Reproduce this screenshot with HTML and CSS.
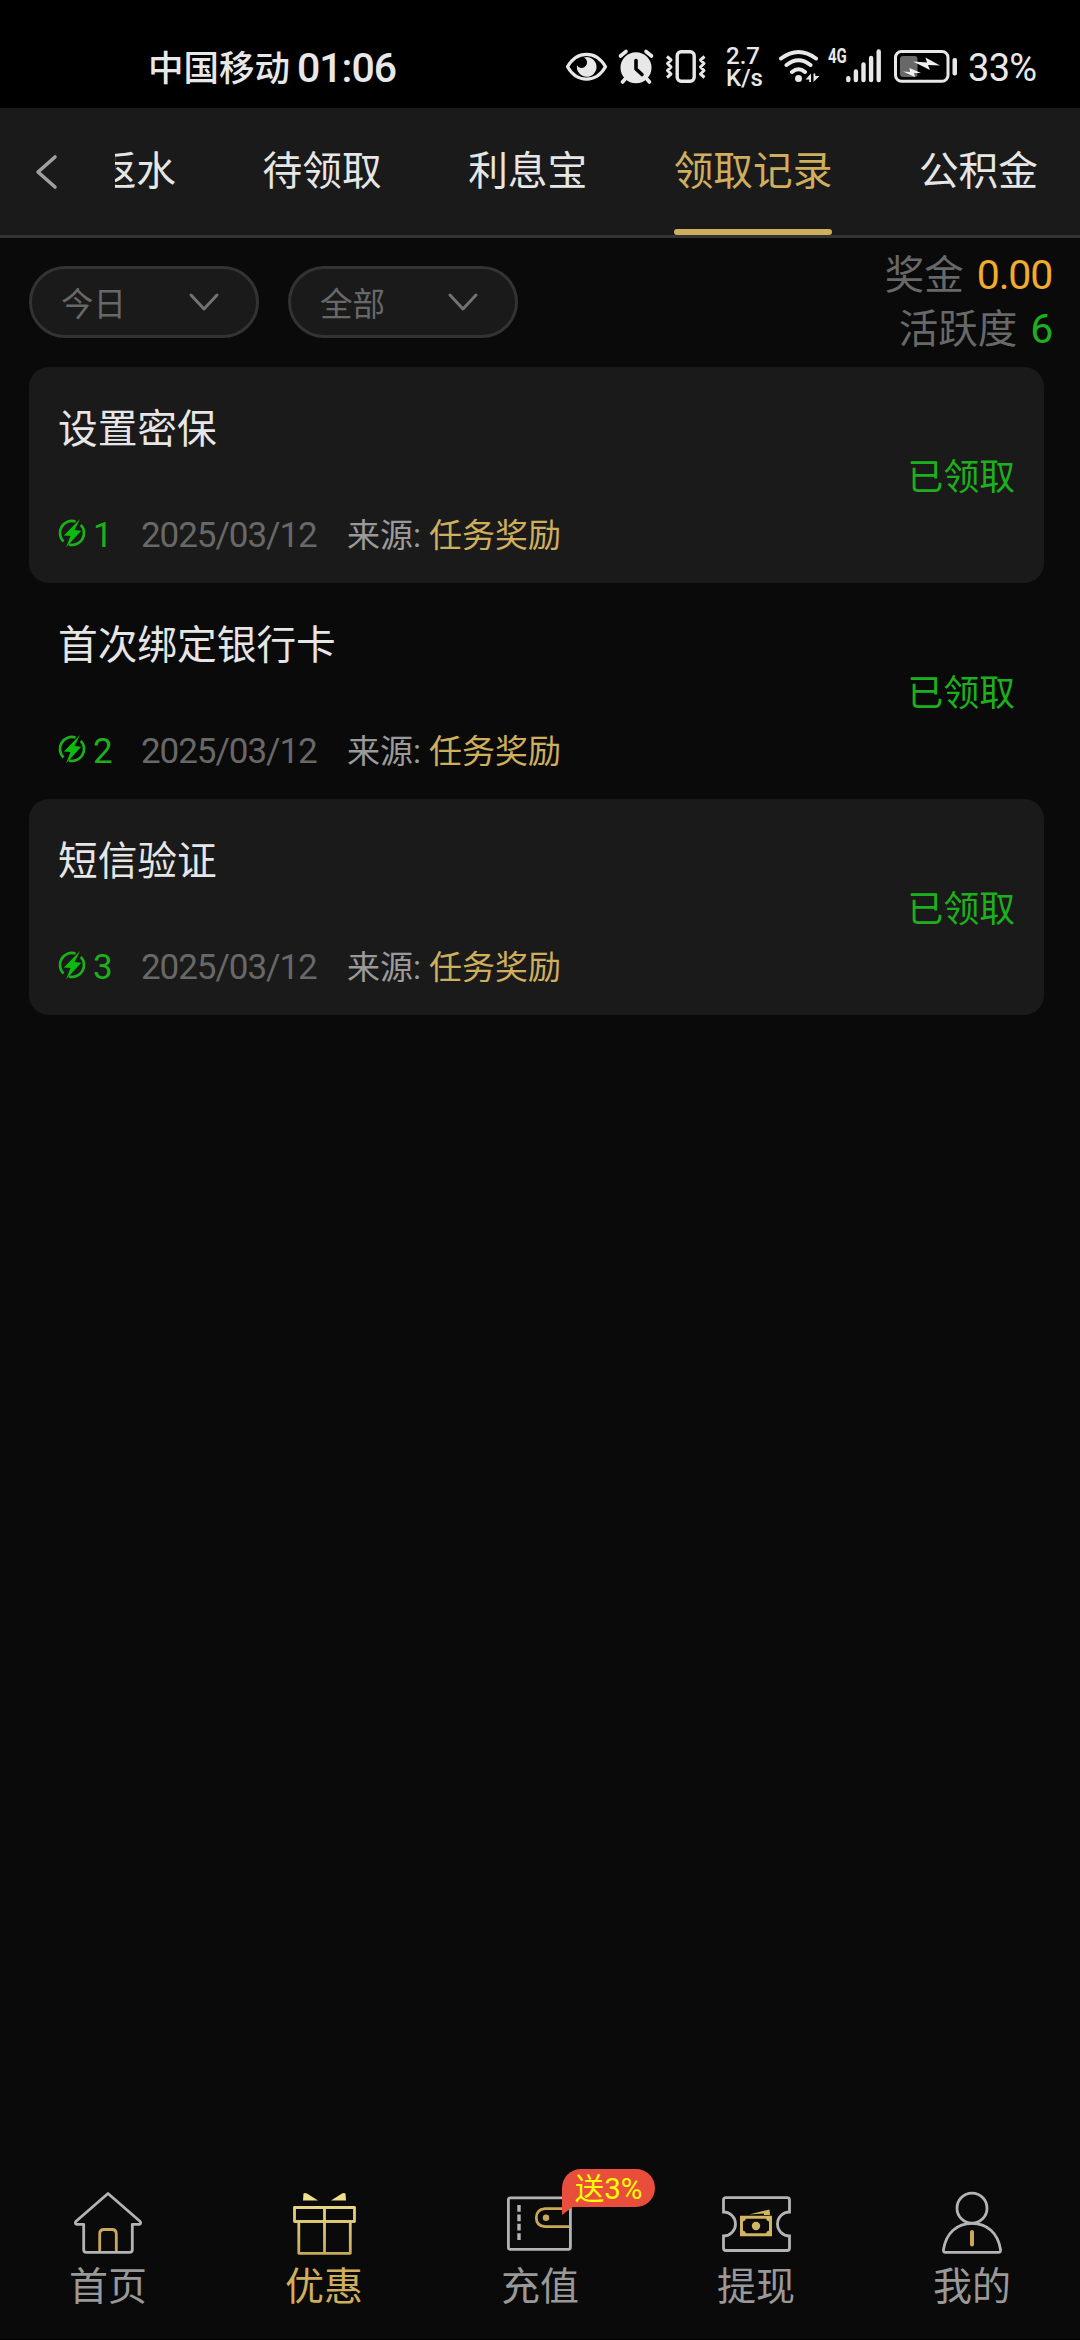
FILE: index.html
```html
<!DOCTYPE html>
<html lang="zh-CN">
<head>
<meta charset="utf-8">
<title>领取记录</title>
<link rel="stylesheet" href="styles.css">
</head>
<body>
<div class="screen">
  <div class="status">
    <span class="carrier">中国移动</span>
    <span class="clock">01:06</span>
    <div class="indicators">
      <svg class="eye" viewBox="565 47 44 40" width="44" height="40">
        <path d="M567.5 66.8C577 50.300 596 50.300 605.500 66.800C596 83.300 577 83.300 567.500 66.800Z" fill="none" stroke="#e8e8e8" stroke-width="3.200" stroke-linejoin="round"/>
        <path d="M584 57.500A9.800 9.800 0 1 1 577 65.500A5.500 5.500 0 1 0 584 57.500Z" fill="#e8e8e8"/>
      </svg>
      <svg class="alarm" viewBox="617 47 38 40" width="38" height="40">
        <circle cx="636" cy="67.800" r="15.500" fill="#e8e8e8"/>
        <path d="M620.500 56L626 51.500M651.500 56L646 51.500M626 78L622.500 82M646 78L649.500 82" stroke="#e8e8e8" stroke-width="3.600" stroke-linecap="round"/>
        <path d="M636 60.500V69L642 74.500" fill="none" stroke="#000" stroke-width="3.600" stroke-linecap="round" stroke-linejoin="round"/>
      </svg>
      <svg class="vibrate" viewBox="664 47 44 40" width="44" height="40">
        <rect x="677.200" y="51.700" width="17" height="29.600" rx="4" fill="none" stroke="#e8e8e8" stroke-width="3.400"/>
        <path d="M667 56.500L671 60L667.500 63.500L671 67L667.500 70.500L671 74L667 77.500M704.500 56.500L700.500 60L704 63.500L700.500 67L704 70.500L700.500 74L704.500 77.500" fill="none" stroke="#e8e8e8" stroke-width="3" stroke-linejoin="round"/>
      </svg>
      <div class="speed"><span>2.7</span><span>K/s</span></div>
      <svg class="wifi" viewBox="777 47 43 40" width="43" height="40">
        <path d="M780 58.500Q797.500 45.500 815 58.500M785.500 65Q797.500 55.500 809.500 65M791 72Q797.500 66.500 804 72" fill="none" stroke="#e8e8e8" stroke-width="4" stroke-linecap="round"/>
        <circle cx="797.500" cy="78.500" r="3.500" fill="#e8e8e8"/>
        <path d="M810 73.500V82H808.200V79.500H804.500ZM812.500 82V73.500H814.300V76H818.500Z" fill="#e8e8e8"/>
      </svg>
      <span class="net">4G</span>
      <svg class="signal" viewBox="844 47 38 40" width="38" height="40">
        <path d="M847.300 78.300V80M854.900 71.500V80M862.500 64.500V80M870.100 58V80M877.700 51.500V80" stroke="#e8e8e8" stroke-width="4.400" stroke-linecap="round"/>
      </svg>
      <svg class="battery" viewBox="892 47 66 40" width="66" height="40">
        <rect x="894.500" y="51.500" width="52.500" height="29.800" rx="6" fill="none" stroke="#e8e8e8" stroke-width="3"/>
        <rect x="899" y="56" width="17.500" height="21" rx="3" fill="#686868"/>
        <rect x="951.500" y="58" width="4.500" height="17.500" rx="2" fill="#e8e8e8"/>
        <path d="M912 61.500L926 62.500L924.500 57.500L939 65.500L927 65L929 70ZM902 71.500L909 72L908.500 68L920 73L913 73L914 77Z" fill="#f0f0f0"/>
      </svg>
      <span class="percent">33%</span>
    </div>
  </div>

  <header class="header">
    <svg class="back" viewBox="33 150 28 42" width="28" height="42"><path d="M55 156L38 171L55 186" fill="none" stroke="#a0a0a0" stroke-width="3.600" stroke-linecap="round" stroke-linejoin="round"/></svg>
    <nav class="tabs">
      <span class="tab">返水</span>
      <span class="tab">待领取</span>
      <span class="tab">利息宝</span>
      <span class="tab active">领取记录</span>
      <span class="tab">公积金</span>
    </nav>
  </header>

  <section class="filters">
    <div class="select"><span>今日</span><svg viewBox="0 0 32 20" width="32" height="20"><path d="M3 3L16 17L29 3" fill="none" stroke="#727272" stroke-width="3" stroke-linecap="round" stroke-linejoin="round"/></svg></div>
    <div class="select"><span>全部</span><svg viewBox="0 0 32 20" width="32" height="20"><path d="M3 3L16 17L29 3" fill="none" stroke="#727272" stroke-width="3" stroke-linecap="round" stroke-linejoin="round"/></svg></div>
    <div class="totals">
      <div>奖金<b class="money">0.00</b></div>
      <div>活跃度<b class="points">6</b></div>
    </div>
  </section>

  <svg class="defs" width="0" height="0">
    <defs>
      <symbol id="bolt" viewBox="0 0 28 30">
        <path d="M17.500 3.500A12 12 0 0 0 5.500 23.500M22.800 6.800A12 12 0 0 1 11 26.600" fill="none" stroke="#1cb01c" stroke-width="2.700"/>
        <path d="M22 1L5.800 17.500L12.500 18L8 29.500L23.200 12.800L16.500 12Z" fill="#0dbb0d"/>
      </symbol>
    </defs>
  </svg>

  <main class="list">
    <article class="record shaded">
      <div class="info">
        <h2>设置密保</h2>
        <div class="meta"><svg width="28" height="30"><use href="#bolt"/></svg><span class="count">1</span><span class="date">2025/03/12</span><span class="source">来源:</span><span class="reward">任务奖励</span></div>
      </div>
      <span class="state">已领取</span>
    </article>
    <article class="record">
      <div class="info">
        <h2>首次绑定银行卡</h2>
        <div class="meta"><svg width="28" height="30"><use href="#bolt"/></svg><span class="count">2</span><span class="date">2025/03/12</span><span class="source">来源:</span><span class="reward">任务奖励</span></div>
      </div>
      <span class="state">已领取</span>
    </article>
    <article class="record shaded">
      <div class="info">
        <h2>短信验证</h2>
        <div class="meta"><svg width="28" height="30"><use href="#bolt"/></svg><span class="count">3</span><span class="date">2025/03/12</span><span class="source">来源:</span><span class="reward">任务奖励</span></div>
      </div>
      <span class="state">已领取</span>
    </article>
  </main>

  <footer class="nav">
    <div class="item">
      <svg viewBox="68 2188 80 70" width="80" height="70" fill="none" stroke-width="2.800" stroke-linejoin="round">
        <path d="M99.700 2251V2234Q99.700 2229.500 104 2229.500H112Q116.300 2229.500 116.300 2234V2251" stroke="#c9a959"/>
        <path d="M108 2193.500L75.800 2221.500Q74.500 2224 77 2224.300H83.700V2249.500Q83.700 2252.400 86.500 2252.400H129.500Q132.300 2252.400 132.300 2249.500V2224.300H139Q141.500 2224 140.200 2221.500Z" stroke="#b4b4b4"/>
      </svg>
      <span>首页</span>
    </div>
    <div class="item active">
      <svg viewBox="284 2188 80 70" width="80" height="70">
        <defs><linearGradient id="gold" gradientUnits="userSpaceOnUse" x1="0" y1="2193" x2="0" y2="2255"><stop offset="0" stop-color="#f0e08c"/><stop offset="1" stop-color="#c9a85c"/></linearGradient></defs>
        <path d="M294.500 2207.500H354.500V2221.500H294.500ZM298.800 2221.500V2253.300H350.300V2221.500M324.500 2207.500V2253" fill="none" stroke="url(#gold)" stroke-width="2.800" stroke-linejoin="round"/>
        <path d="M303 2200.500L303.500 2193.500Q305 2192.300 307 2193.500L318 2200.500ZM346 2200.500L345.500 2193.500Q344 2192.300 342 2193.500L331 2200.500Z" fill="#f0e08c"/>
      </svg>
      <span>优惠</span>
    </div>
    <div class="item">
      <svg viewBox="500 2188 80 70" width="80" height="70" fill="none">
        <rect x="508.400" y="2197.800" width="62" height="51.500" rx="2" stroke="#b4b4b4" stroke-width="2.800"/>
        <path d="M519 2205V2240" stroke="#b4b4b4" stroke-width="3.400" stroke-dasharray="6.800 2.600"/>
        <path d="M569 2208.700H545Q536.300 2209.500 536.300 2217.700T545 2226.700H569" stroke="#c9a959" stroke-width="2.800"/>
        <circle cx="546" cy="2217.700" r="3.200" fill="#c9a959"/>
      </svg>
      <span>充值</span>
      <div class="badge">送3%</div>
    </div>
    <div class="item">
      <svg viewBox="716 2188 80 70" width="80" height="70">
        <path d="M723.500 2212V2200Q723.500 2197.700 726 2197.700H787Q789.500 2197.700 789.500 2200V2212A12 12 0 0 0 789.500 2236V2248Q789.500 2250.500 787 2250.500H726Q723.500 2250.500 723.500 2248V2236A12 12 0 0 0 723.500 2212Z" fill="none" stroke="#b4b4b4" stroke-width="2.800"/>
        <path fill-rule="evenodd" d="M740 2215.700H772V2236.200H740ZM746 2218.700Q745.500 2221 743 2221.500V2230.500Q745.500 2231 746 2233.300H766Q766.500 2231 769 2230.500V2221.500Q766.500 2221 766 2218.700ZM749 2214.500L769.500 2209.500L770 2215H764V2213.500Z" fill="#d2b560"/>
        <circle cx="756" cy="2226" r="4.200" fill="#d2b560"/>
      </svg>
      <span>提现</span>
    </div>
    <div class="item">
      <svg viewBox="932 2188 80 70" width="80" height="70" fill="none" stroke="#b4b4b4" stroke-width="2.800" stroke-linejoin="round">
        <circle cx="972" cy="2208.200" r="15"/>
        <path d="M945 2252.300Q943.200 2252.300 943.500 2249.500C946 2233 957 2223.300 972 2223.300S998 2233 1000.500 2249.500Q1000.800 2252.300 999 2252.300Z"/>
        <path d="M972 2232V2244.500" stroke="#c9a959" stroke-width="4" stroke-linecap="round"/>
      </svg>
      <span>我的</span>
    </div>
  </footer>
</div>
</body>
</html>
```
FILE: styles.css
```css
* { box-sizing: border-box; }
body { margin: 0; background: #0a0a0a; }
svg { display: block; flex: none; }
.defs { display: none; }
.screen {
  width: 1080px;
  height: 2340px;
  display: flex;
  flex-direction: column;
  overflow: hidden;
  background: #0a0a0a;
  font-family: Roboto, "Noto Sans CJK SC", sans-serif;
  color: #e6e6e6;
}

.status {
  height: 108px;
  flex: none;
  padding: 26px 0 0 148px;
  display: flex;
  align-items: center;
  background: #000;
  color: #e8e8e8;
  white-space: nowrap;
}
.carrier { width: 149px; padding-bottom: 4px; font-size: 35.500px; font-weight: 500; }
.clock { width: 268px; padding-top: 1px; font-size: 41px; font-weight: 500; letter-spacing: -1px; }
.indicators { display: flex; align-items: center; }
.alarm { margin-left: 8px; }
.vibrate { margin-left: 9px; }
.speed {
  width: 52px;
  margin-left: 18px;
  display: flex;
  flex-direction: column;
  font-size: 24px;
  line-height: 22px;
  font-weight: 500;
}
.net {
  width: 17px;
  margin: -22px 0 0 7px;
  font-size: 20px;
  font-weight: 700;
  line-height: 20px;
  transform: scaleX(0.750);
  transform-origin: left;
}
.battery { margin-left: 10px; }
.percent { margin-left: 9px; padding-top: 2px; font-size: 38px; letter-spacing: -0.700px; }

.header {
  height: 130px;
  flex: none;
  display: flex;
  align-items: center;
  padding-left: 33px;
  background: #1a1a1a;
  border-bottom: 3px solid #333;
}
.tabs {
  flex: 1;
  height: 100%;
  margin-left: 54px;
  display: flex;
  justify-content: flex-end;
  gap: 86.500px;
  padding-right: 42px;
  overflow: hidden;
}
.tab {
  flex: none;
  display: flex;
  flex-direction: column;
  font-size: 39.700px;
  line-height: 127px;
  white-space: nowrap;
}
.active { color: #cfae5d; }
.tab.active::after {
  content: "";
  height: 6px;
  margin-top: -6px;
  border-radius: 3px;
  background: #cfae5d;
}

.filters {
  height: 129px;
  flex: none;
  display: flex;
  align-items: flex-start;
  padding: 28px 29px 0 29px;
  gap: 29px;
}
.select {
  width: 230px;
  height: 72px;
  display: flex;
  align-items: center;
  justify-content: space-between;
  padding: 0 36px 0 29px;
  border: 3px solid #333;
  border-radius: 36px;
  background: #1a1a1a;
  color: #686868;
  font-size: 32.500px;
}
.select span { padding-bottom: 2px; }
.totals {
  margin: -17px -1px 0 auto;
  text-align: right;
  color: #686868;
  font-size: 39.500px;
  line-height: 53.500px;
}
.totals b { margin-left: 13px; font-weight: 400; font-size: 41px; letter-spacing: -1.200px; }
.money { color: #f2ab2c; }
.points { color: #1cb01c; }

.list { flex: 1; padding: 0 36px 0 29px; }
.record {
  height: 216px;
  display: flex;
  align-items: center;
  justify-content: space-between;
  padding: 0 29px;
  border-radius: 20px;
}
.shaded { background: #1a1a1a; }
.info { height: 100%; padding-top: 38px; }
h2 { margin: 0; font-size: 39.700px; line-height: 50px; font-weight: 400; }
.meta {
  display: flex;
  align-items: center;
  margin-top: 59px;
  height: 44px;
  font-size: 33px;
  line-height: 44px;
  white-space: nowrap;
}
.meta svg { margin-top: -6px; }
.count { width: 48px; margin-left: 7px; color: #1cb01c; font-size: 35px; }
.date { width: 206px; color: #686868; font-size: 35px; letter-spacing: -1.050px; }
.source { width: 82px; color: #9a9a9a; }
.reward { color: #cfae5d; }
.state { padding-bottom: 2px; color: #1cb01c; font-size: 35.800px; }

.nav {
  height: 172px;
  flex: none;
  display: flex;
  border-bottom: 1px solid #000;
}
.item {
  position: relative;
  flex: 1;
  padding-top: 20px;
  display: flex;
  flex-direction: column;
  align-items: center;
  font-size: 39px;
  line-height: 58px;
  color: #999;
}
.item.active { color: #cfae5d; }
.badge {
  position: absolute;
  left: 130px;
  top: 1px;
  width: 93px;
  height: 38px;
  border-radius: 19px 19px 19px 0;
  background: #e94e3d;
  color: #ff0;
  font-size: 29.500px;
  line-height: 41px;
  text-align: center;
}
.badge::after {
  content: "";
  position: absolute;
  left: 0;
  top: 37px;
  border-top: 9px solid #e94e3d;
  border-right: 12px solid transparent;
}
```
